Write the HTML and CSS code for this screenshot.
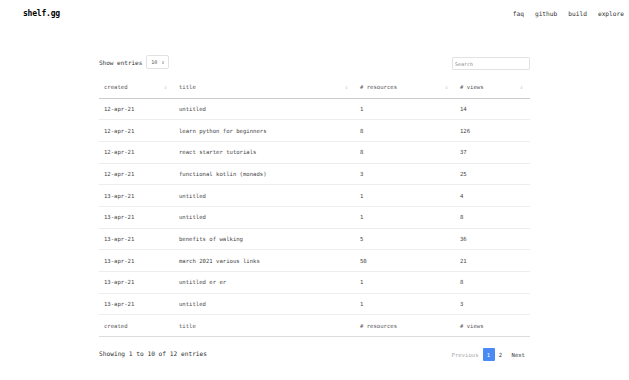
FILE: index.html
```html
<!DOCTYPE html>
<html>
<head>
<meta charset="utf-8">
<link rel="stylesheet" href="styles.css">
</head>
<body>
<header class="topbar">
  <div class="logo">shelf.gg</div>
  <nav class="nav">
    <a>faq</a><a>github</a><a>build</a><a>explore</a>
  </nav>
</header>
<main class="wrap">
  <div class="controls">
    <label class="length">Show entries <span class="select">10 <span class="caret">&#8661;</span></span></label>
    <span class="search">Search</span>
  </div>
  <table class="grid">
    <colgroup><col class="c1"><col class="c2"><col class="c3"><col class="c4"></colgroup>
    <thead>
      <tr><th>created<span class="sort">&#8661;</span></th><th>title<span class="sort">&#8661;</span></th><th># resources<span class="sort">&#8661;</span></th><th># views<span class="sort">&#8661;</span></th></tr>
    </thead>
    <tbody>
      <tr><td>12-apr-21</td><td>untitled</td><td>1</td><td>14</td></tr>
      <tr><td>12-apr-21</td><td>learn python for beginners</td><td>8</td><td>126</td></tr>
      <tr><td>12-apr-21</td><td>react starter tutorials</td><td>8</td><td>37</td></tr>
      <tr><td>12-apr-21</td><td>functional kotlin (monads)</td><td>3</td><td>25</td></tr>
      <tr><td>13-apr-21</td><td>untitled</td><td>1</td><td>4</td></tr>
      <tr><td>13-apr-21</td><td>untitled</td><td>1</td><td>8</td></tr>
      <tr><td>13-apr-21</td><td>benefits of walking</td><td>5</td><td>36</td></tr>
      <tr><td>13-apr-21</td><td>march 2021 various links</td><td>50</td><td>21</td></tr>
      <tr><td>13-apr-21</td><td>untitled er er</td><td>1</td><td>8</td></tr>
      <tr><td>13-apr-21</td><td>untitled</td><td>1</td><td>3</td></tr>
    </tbody>
    <tfoot>
      <tr><th>created</th><th>title</th><th># resources</th><th># views</th></tr>
    </tfoot>
  </table>
  <div class="footer">
    <span class="info">Showing 1 to 10 of 12 entries</span>
    <div class="pager">
      <span class="prev">Previous</span>
      <span class="page current">1</span>
      <span class="page">2</span>
      <span class="next">Next</span>
    </div>
  </div>
</main>
</body>
</html>
```
FILE: styles.css
```css
html, body {
  margin: 0;
  padding: 0;
  background: #fff;
}
body {
  font-family: "DejaVu Sans Mono", "Liberation Mono", monospace;
  color: #222;
  font-size: 6px;
}
.topbar {
  height: 26px;
  display: flex;
  align-items: center;
  justify-content: space-between;
  padding: 0 5px 0 23px;
}
.logo {
  font-weight: bold;
  font-size: 8px;
  color: #000;
  letter-spacing: -0.2px;
}
.nav {
  display: flex;
  gap: 11px;
  font-size: 6.2px;
  color: #333;
}
.wrap {
  width: 431px;
  margin: 29px auto 0;
}
.controls {
  display: flex;
  justify-content: space-between;
  align-items: center;
  height: 14px;
  color: #333;
}
.length {
  display: flex;
  align-items: center;
  gap: 4px;
  font-size: 6px;
}
.select {
  display: inline-flex;
  align-items: center;
  gap: 4px;
  height: 12px;
  padding: 0 4px;
  border: 1px solid #e2e2e2;
  border-radius: 2px;
  font-size: 5px;
  color: #555;
}
.caret {
  font-size: 5px;
}
.search {
  display: flex;
  align-items: center;
  width: 72px;
  height: 11px;
  margin-top: 3px;
  padding: 0 2px;
  border: 1px solid #e2e2e2;
  border-radius: 1px;
  font-size: 5px;
  color: #888;
}
.grid {
  width: 100%;
  border-collapse: collapse;
  table-layout: fixed;
  margin-top: 7px;
}
.c1 { width: 75px; }
.c2 { width: 181px; }
.c3 { width: 100px; }
.c4 { width: 75px; }
.grid th, .grid td {
  text-align: left;
  font-weight: normal;
  font-size: 5.6px;
  padding: 0 5px;
  height: 21.7px;
  box-sizing: border-box;
}
.grid thead th {
  color: #555;
  height: 22px;
  border-bottom: 1px solid #ccc;
}
.grid td {
  color: #444;
  border-top: 1px solid #ededed;
}
.grid tbody tr:first-child td {
  border-top: none;
}
.grid tfoot th {
  color: #555;
  border-top: 1px solid #ededed;
  border-bottom: 1px solid #ddd;
}
.sort {
  float: right;
  color: #bbb;
  font-size: 5px;
  margin-right: 2px;
}
.footer {
  display: flex;
  justify-content: space-between;
  align-items: center;
  margin-top: 8px;
}
.info {
  font-size: 6.2px;
  color: #333;
}
.pager {
  display: flex;
  align-items: center;
  gap: 0;
  font-size: 5.6px;
  margin-right: 5px;
  margin-top: 3px;
}
.prev {
  color: #aaa;
  margin-right: 4px;
}
.page {
  display: flex;
  align-items: center;
  justify-content: center;
  width: 12px;
  height: 13px;
  color: #333;
}
.page.current {
  background: #4a8af4;
  color: #fff;
  border-radius: 1px;
}
.next {
  color: #333;
  margin-left: 5px;
}
```
